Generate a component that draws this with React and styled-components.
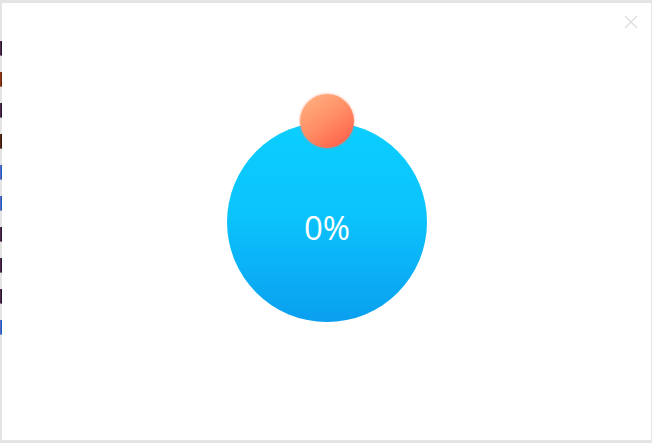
import React from 'react';
import styled, { createGlobalStyle } from 'styled-components';

const Global = createGlobalStyle`
  html, body {
    margin: 0;
    padding: 0;
    width: 100%;
    height: 100%;
    overflow: hidden;
  }
  body {
    background: #e4e4e4;
    font-family: "Open Sans", "Liberation Sans", sans-serif;
  }
`;

const BackPage = styled.div`
  display: flex;
  flex-direction: column;
  gap: 14px;
  padding: 40px 0 0 0;
  height: 443px;
  box-sizing: border-box;
  font-family: "Liberation Sans", sans-serif;
  font-size: 12px;
`;

const BackLine = styled.div`
  color: ${(p) => p.$color || '#2a1a10'};
  white-space: nowrap;
`;

const Modal = styled.div`
  position: fixed;
  top: 3px;
  left: 2px;
  right: 1px;
  bottom: 3px;
  background: #fff;
  display: flex;
  align-items: center;
  justify-content: center;
`;

const Close = styled.button`
  position: absolute;
  top: 10px;
  right: 11px;
  width: 18px;
  height: 18px;
  padding: 0;
  border: 0;
  background: transparent;
  display: flex;
  align-items: center;
  justify-content: center;
  cursor: pointer;
`;

const Wrap = styled.div`
  position: relative;
  width: 200px;
  height: 200px;
  margin-left: 1px;
`;

const Globe = styled.div`
  width: 200px;
  height: 200px;
  border-radius: 50%;
  background: linear-gradient(180deg, #0bcefe 0%, #0bc4fd 45%, #0a9fef 100%);
  display: flex;
  align-items: center;
  justify-content: center;
  color: #fff;
  font-size: 33px;
  padding-top: 12px;
  box-sizing: border-box;
`;

const Ball = styled.div`
  position: absolute;
  top: -28px;
  left: 50%;
  width: 54px;
  height: 54px;
  margin-left: -27px;
  border-radius: 50%;
  background: linear-gradient(145deg, #ffb584 0%, #ff8d65 50%, #ff5744 100%);
  box-shadow: 0 0 2px 1px rgba(255, 130, 100, 0.35);
`;

const lines = ['#1a1a40', '#6a2a10', '#1a1a40', '#2a1a10', '#1b5fc0', '#1b5fc0', '#1a1a40', '#1a1a40', '#1a1a40', '#1b5fc0'];

export default function App() {
  return (
    <>
      <Global />
      <BackPage>
        {lines.map((c, i) => (
          <BackLine key={i} $color={c}>
            {'▌ 数据加载中，请稍候'}
          </BackLine>
        ))}
      </BackPage>
      <Modal>
        <Close aria-label="close">
          <svg width="14" height="14" viewBox="0 0 14 14">
            <path d="M1 1L13 13M13 1L1 13" stroke="#dcdcdc" strokeWidth="1.2" fill="none" />
          </svg>
        </Close>
        <Wrap>
          <Globe>0%</Globe>
          <Ball />
        </Wrap>
      </Modal>
    </>
  );
}
